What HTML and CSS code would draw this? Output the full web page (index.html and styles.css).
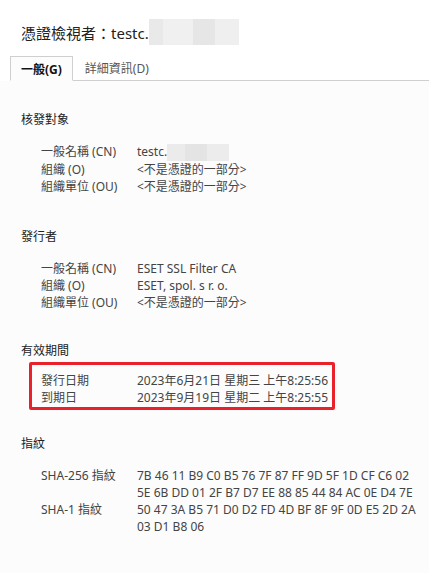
FILE: index.html
```html
<!DOCTYPE html>
<html lang="zh-Hant">
<head>
<meta charset="utf-8">
<link rel="stylesheet" href="styles.css">
</head>
<body>
<div class="header">
  <div class="title"><span>憑證檢視者：testc.</span><span class="blur big"><i class="b1"></i><i class="b2"></i><i class="b3"></i><i class="b4"></i></span></div>
  <div class="tabs">
    <div class="tab active">一般(G)</div>
    <div class="tab">詳細資訊(D)</div>
    <div class="tabfill"></div>
  </div>
</div>
<div class="content">
  <div class="section s1">
    <div class="heading">核發對象</div>
    <div class="rows">
      <div class="row"><div class="label">一般名稱 (CN)</div><div class="value">testc.<span class="blur small"><i class="b1"></i><i class="b2"></i><i class="b3"></i></span></div></div>
      <div class="row"><div class="label">組織 (O)</div><div class="value">&lt;不是憑證的一部分&gt;</div></div>
      <div class="row"><div class="label">組織單位 (OU)</div><div class="value">&lt;不是憑證的一部分&gt;</div></div>
    </div>
  </div>
  <div class="section s2">
    <div class="heading">發行者</div>
    <div class="rows">
      <div class="row"><div class="label">一般名稱 (CN)</div><div class="value">ESET SSL Filter CA</div></div>
      <div class="row"><div class="label">組織 (O)</div><div class="value">ESET, spol. s r. o.</div></div>
      <div class="row"><div class="label">組織單位 (OU)</div><div class="value">&lt;不是憑證的一部分&gt;</div></div>
    </div>
  </div>
  <div class="section s3">
    <div class="heading">有效期間</div>
    <div class="rows marked">
      <div class="row"><div class="label">發行日期</div><div class="value">2023年6月21日 星期三 上午8:25:56</div></div>
      <div class="row"><div class="label">到期日</div><div class="value">2023年9月19日 星期二 上午8:25:55</div></div>
    </div>
  </div>
  <div class="section s4">
    <div class="heading">指紋</div>
    <div class="rows">
      <div class="row"><div class="label">SHA-256 指紋</div><div class="value">7B 46 11 B9 C0 B5 76 7F 87 FF 9D 5F 1D CF C6 02<br>5E 6B DD 01 2F B7 D7 EE 88 85 44 84 AC 0E D4 7E</div></div>
      <div class="row"><div class="label">SHA-1 指紋</div><div class="value">50 47 3A B5 71 D0 D2 FD 4D BF 8F 9F 0D E5 2D 2A<br>03 D1 B8 06</div></div>
    </div>
  </div>
</div>
</body>
</html>
```
FILE: styles.css
```css
html, body {
  margin: 0;
  padding: 0;
  background: #fcfcfc;
  font-family: "Noto Sans", "Noto Sans CJK TC", sans-serif;
  color: #444;
}
.header {
  background: #ffffff;
}
.title {
  display: flex;
  align-items: center;
  height: 56px;
  padding-left: 21px;
  padding-top: 8px;
  font-size: 15px;
  color: #222;
  box-sizing: border-box;
}
.blur {
  display: inline-flex;
  background: #ededed;
}
.blur i {
  display: block;
  height: 100%;
}
.blur.big {
  width: 90px;
  height: 26px;
}
.blur.big .b1 { width: 14px; background: #e9e9e9; }
.blur.big .b2 { width: 30px; background: #f0f0f0; }
.blur.big .b3 { width: 22px; background: #e6e6e6; }
.blur.big .b4 { width: 24px; background: #efefef; }
.blur.small {
  width: 62px;
  height: 17px;
  vertical-align: middle;
}
.blur.small .b1 { width: 18px; background: #ebebeb; }
.blur.small .b2 { width: 22px; background: #e4e4e4; }
.blur.small .b3 { width: 22px; background: #ececec; }
.tabs {
  display: flex;
  height: 25px;
  padding-left: 10px;
  font-size: 12px;
}
.tab {
  display: flex;
  align-items: center;
  padding: 0 12px;
  color: #555;
  white-space: nowrap;
  border-bottom: 1px solid #cfcfcf;
}
.tab.active {
  color: #111;
  font-weight: 700;
  border: 1px solid #cfcfcf;
  border-bottom-color: #fcfcfc;
  background: #fcfcfc;
  padding: 0 10px;
}
.tabfill {
  flex: 1;
  border-bottom: 1px solid #cfcfcf;
}
.content {
  padding: 30px 0 0 21px;
  font-size: 12px;
  line-height: 17px;
}
.heading {
  color: #222;
}
.section.s1 {
  margin-bottom: 33px;
}
.section.s2 {
  margin-bottom: 31px;
}
.section.s3 {
  margin-bottom: 25px;
}
.rows {
  margin-top: 15px;
  padding-left: 20px;
}
.rows.marked {
  margin-top: 3px;
  margin-left: 8px;
  margin-right: 94px;
  padding: 7px 0 1px 9px;
  border: 3px solid #e8212b;
  border-radius: 2px;
}
.row {
  display: flex;
}
.label {
  width: 96px;
  flex: none;
}
.value {
  color: #444;
}
```
